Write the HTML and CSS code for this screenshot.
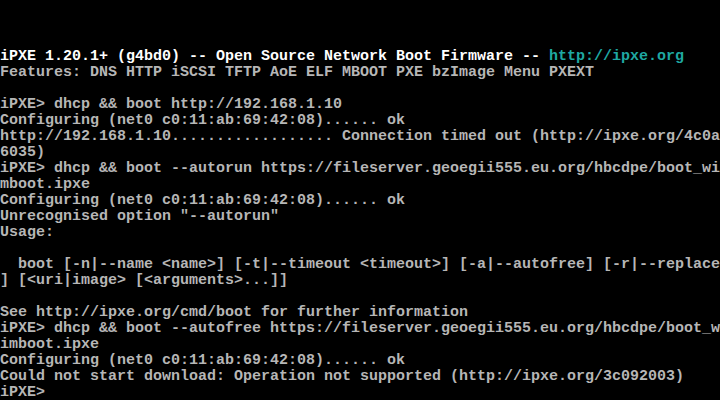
FILE: index.html
```html
<!DOCTYPE html>
<html>
<head>
<meta charset="utf-8">
<link rel="stylesheet" href="styles.css">
</head>
<body>
<div class="screen">
<div class="row bright">iPXE 1.20.1+ (g4bd0) -- Open Source Network Boot Firmware -- <span class="url">http://ipxe.org</span></div>
<div class="row">Features: DNS HTTP iSCSI TFTP AoE ELF MBOOT PXE bzImage Menu PXEXT</div>
<div class="row"> </div>
<div class="row">iPXE&gt; dhcp &amp;&amp; boot http://192.168.1.10</div>
<div class="row">Configuring (net0 c0:11:ab:69:42:08)...... ok</div>
<div class="row">http://192.168.1.10.................. Connection timed out (http://ipxe.org/4c0a</div>
<div class="row">6035)</div>
<div class="row">iPXE&gt; dhcp &amp;&amp; boot --autorun https://fileserver.geoegii555.eu.org/hbcdpe/boot_wi</div>
<div class="row">mboot.ipxe</div>
<div class="row">Configuring (net0 c0:11:ab:69:42:08)...... ok</div>
<div class="row">Unrecognised option "--autorun"</div>
<div class="row">Usage:</div>
<div class="row"> </div>
<div class="row">  boot [-n|--name &lt;name&gt;] [-t|--timeout &lt;timeout&gt;] [-a|--autofree] [-r|--replace</div>
<div class="row">] [&lt;uri|image&gt; [&lt;arguments&gt;...]]</div>
<div class="row"> </div>
<div class="row">See http://ipxe.org/cmd/boot for further information</div>
<div class="row">iPXE&gt; dhcp &amp;&amp; boot --autofree https://fileserver.geoegii555.eu.org/hbcdpe/boot_w</div>
<div class="row">imboot.ipxe</div>
<div class="row">Configuring (net0 c0:11:ab:69:42:08)...... ok</div>
<div class="row">Could not start download: Operation not supported (http://ipxe.org/3c092003)</div>
<div class="row">iPXE&gt;</div>
</div>
</body>
</html>
```
FILE: styles.css
```css
html, body {
  margin: 0;
  padding: 0;
  background: #000;
}
body {
  width: 720px;
  height: 400px;
  overflow: hidden;
}
.screen {
  width: 720px;
  height: 400px;
  padding-top: 49px;
  box-sizing: border-box;
  font-family: "Liberation Mono", "DejaVu Sans Mono", monospace;
  font-size: 15px;
  font-weight: bold;
  line-height: 16px;
  color: #b6b6b6;
}
.row {
  height: 16px;
  white-space: pre;
  overflow: hidden;
}
.bright {
  color: #ffffff;
}
.url {
  color: #1fa8a2;
}
```
